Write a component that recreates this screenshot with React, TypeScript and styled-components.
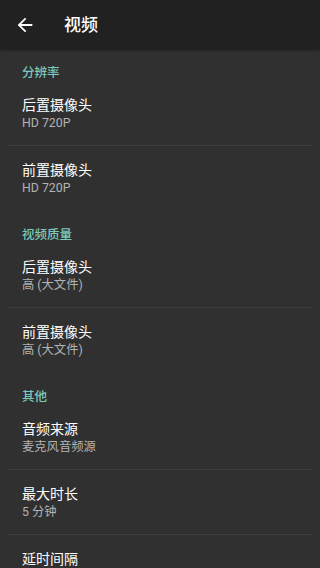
import React from "react";
import styled, { createGlobalStyle } from "styled-components";

const Global = createGlobalStyle`
  html, body {
    margin: 0;
    padding: 0;
    background: #303030;
  }
  body {
    font-family: Roboto, "Noto Sans CJK SC", "Noto Sans", sans-serif;
    -webkit-font-smoothing: antialiased;
  }
`;

const Screen = styled.div`
  width: 320px;
  height: 568px;
  overflow: hidden;
  background: #303030;
  display: flex;
  flex-direction: column;
`;

const Toolbar = styled.header`
  height: 49px;
  flex: none;
  background: #212121;
  display: flex;
  align-items: center;
  padding-left: 14px;
  box-shadow: 0 1px 3px rgba(0, 0, 0, 0.45);
  position: relative;
  z-index: 1;
`;

const BackButton = styled.button`
  width: 22px;
  height: 22px;
  padding: 0;
  margin: 0 28px 0 0;
  border: none;
  background: transparent;
  display: flex;
  align-items: center;
  justify-content: center;
  color: #ffffff;
`;

const Title = styled.h1`
  margin: 0;
  font-size: 17px;
  font-weight: 500;
  color: #ffffff;
  line-height: 24px;
`;

const List = styled.div`
  display: flex;
  flex-direction: column;
`;

const Category = styled.div`
  height: 32px;
  box-sizing: border-box;
  padding: 16px 0 0 22px;
  font-size: 12.5px;
  line-height: 16px;
  color: #7ccabd;
  font-weight: 500;
`;

const Item = styled.div<{ $divider: boolean }>`
  height: 65px;
  flex: none;
  box-sizing: border-box;
  display: flex;
  flex-direction: column;
  padding: 14px 0 1px 22px;
  position: relative;
  &::after {
    content: "";
    position: absolute;
    left: 7px;
    right: 7px;
    bottom: 0;
    height: 1px;
    background: ${(p) => (p.$divider ? "#3d3d3d" : "transparent")};
  }
`;

const ItemTitle = styled.div`
  font-size: 14px;
  line-height: 20px;
  color: #ffffff;
`;

const ItemSummary = styled.div`
  font-size: 12.3px;
  line-height: 16px;
  color: #b3b3b3;
`;

type Pref = { title: string; summary?: string };
type Section = { name: string; items: Pref[] };

const sections: Section[] = [
  {
    name: "分辨率",
    items: [
      { title: "后置摄像头", summary: "HD 720P" },
      { title: "前置摄像头", summary: "HD 720P" },
    ],
  },
  {
    name: "视频质量",
    items: [
      { title: "后置摄像头", summary: "高 (大文件)" },
      { title: "前置摄像头", summary: "高 (大文件)" },
    ],
  },
  {
    name: "其他",
    items: [
      { title: "音频来源", summary: "麦克风音频源" },
      { title: "最大时长", summary: "5 分钟" },
      { title: "延时间隔" },
    ],
  },
];

const ArrowBack = () => (
  <svg width="22" height="22" viewBox="0 0 24 24" fill="currentColor">
    <path d="M20 11H7.83l5.59-5.59L12 4l-8 8 8 8 1.41-1.41L7.83 13H20v-2z" />
  </svg>
);

export default function App() {
  return (
    <>
      <Global />
      <Screen>
        <Toolbar>
          <BackButton aria-label="返回">
            <ArrowBack />
          </BackButton>
          <Title>视频</Title>
        </Toolbar>
        <List>
          {sections.map((s) => (
            <React.Fragment key={s.name}>
              <Category>{s.name}</Category>
              {s.items.map((it, i) => (
                <Item key={s.name + i} $divider={i < s.items.length - 1}>
                  <ItemTitle>{it.title}</ItemTitle>
                  {it.summary && <ItemSummary>{it.summary}</ItemSummary>}
                </Item>
              ))}
            </React.Fragment>
          ))}
        </List>
      </Screen>
    </>
  );
}
